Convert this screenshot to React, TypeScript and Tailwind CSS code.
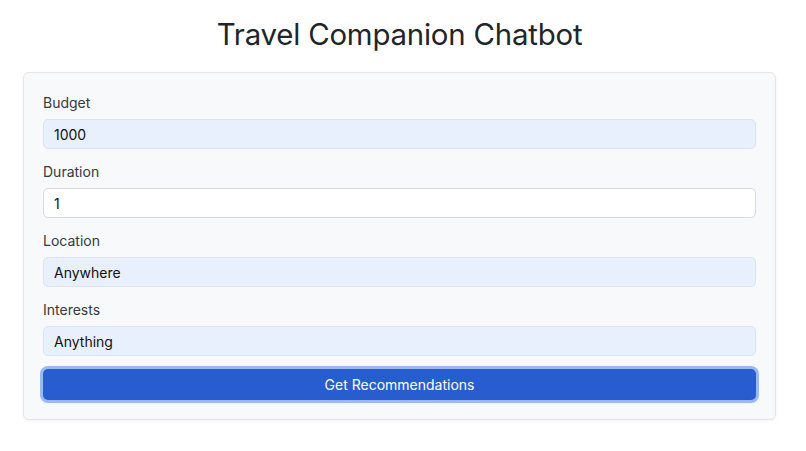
import { useState } from 'react';

const fields = [
  { label: 'Budget', value: '1000', autofill: true },
  { label: 'Duration', value: '1', autofill: false },
  { label: 'Location', value: 'Anywhere', autofill: true },
  { label: 'Interests', value: 'Anything', autofill: true },
];

export default function App() {
  const [values, setValues] = useState(fields.map((f) => f.value));

  return (
    <div className="min-h-screen bg-white pl-[23px] pr-[30px] pt-[17px] font-['Inter','Liberation_Sans',sans-serif] text-[#212529]">
      <h1 className="text-center text-[29.4px] font-normal leading-[36px] tracking-[-0.2px]">Travel Companion Chatbot</h1>

      <div className="mt-[19px] rounded-md border border-[#e3e6ea] bg-[#f8f9fa] px-[19px] pt-5 pb-[19px] shadow-[0_1px_3px_rgba(0,0,0,0.06)]">
        <div className="flex flex-col gap-[13px]">
          {fields.map((f, i) => (
            <div key={f.label}>
              <label className="mb-1.5 block text-sm leading-5 text-[#343a40]">{f.label}</label>
              <input
                value={values[i]}
                onChange={(e) => {
                  const next = [...values];
                  next[i] = e.target.value;
                  setValues(next);
                }}
                className={
                  f.autofill
                    ? 'block h-[30px] w-full rounded-[5px] border border-[#dde3ee] bg-[#e8f0fe] px-2.5 text-sm text-[#111] outline-none'
                    : 'block h-[30px] w-full rounded-[5px] border border-[#d6dae0] bg-white px-2.5 text-sm text-[#111] outline-none'
                }
              />
            </div>
          ))}
          <button className="h-[31px] w-full rounded-[5px] bg-[#285dd0] text-sm text-white ring-[3px] ring-[#9ab8f2]">
            Get Recommendations
          </button>
        </div>
      </div>
    </div>
  );
}
